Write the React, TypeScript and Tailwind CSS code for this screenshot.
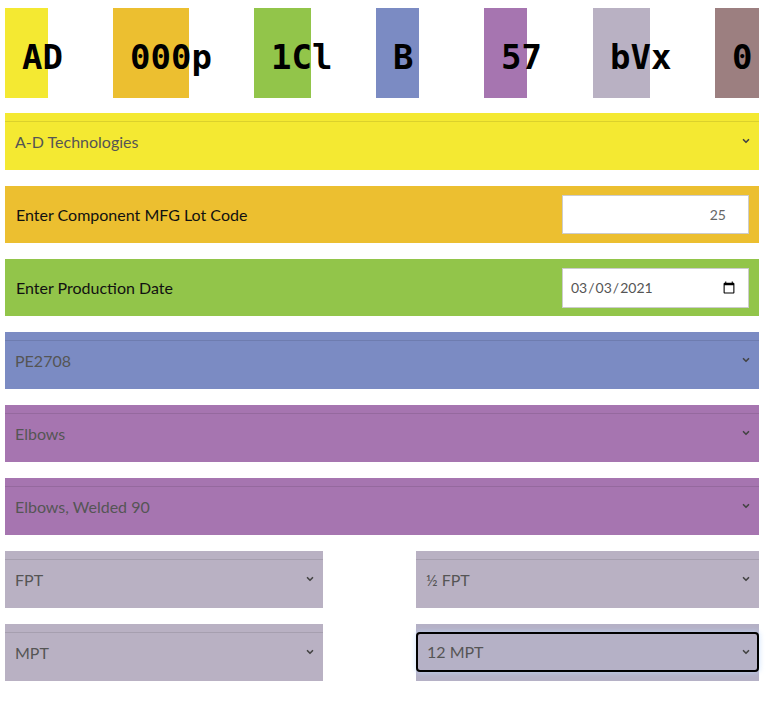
import { ChevronDown } from "lucide-react";

const cells = [
  { text: "AD", bg: "bg-[#f4e932]", box: "w-[43px]", cell: "w-[108px]" },
  { text: "000p", bg: "bg-[#ecbf30]", box: "w-[76px]", cell: "w-[141px]" },
  { text: "1Cl", bg: "bg-[#92c54a]", box: "w-[57px]", cell: "w-[122px]" },
  { text: "B", bg: "bg-[#7b8bc3]", box: "w-[43px]", cell: "w-[108px]" },
  { text: "57", bg: "bg-[#a675b0]", box: "w-[43px]", cell: "w-[109px]" },
  { text: "bVx", bg: "bg-[#b9b1c3]", box: "w-[57px]", cell: "w-[122px]" },
  { text: "0", bg: "bg-[#9c7f80]", box: "w-[44px]", cell: "w-[44px]" },
];

function SelectRow({
  value,
  bg,
  width = "w-full",
  focused = false,
}: {
  value: string;
  bg: string;
  width?: string;
  focused?: boolean;
}) {
  return (
    <div className={`${bg} ${width} h-[57px] pt-[8px]`}>
      <div className="relative">
        <select
          defaultValue={value}
          className={
            focused
              ? "block w-full h-[40px] appearance-none rounded-[4px] border-2 border-black bg-transparent pl-[9px] text-[16px] text-[#555] outline-none shadow-[0_0_5px_1px_rgba(191,219,254,0.6)]"
              : "block w-full h-[40px] appearance-none border-t border-black/10 bg-transparent pl-[10px] text-[16px] text-[#555] outline-none"
          }
        >
          <option>{value}</option>
        </select>
        <ChevronDown
          className="pointer-events-none absolute right-[8px] top-[15px] h-[10px] w-[10px] text-[#444]"
          strokeWidth={4}
        />
      </div>
    </div>
  );
}

function InputRow({ label, bg, children }: { label: string; bg: string; children: React.ReactNode }) {
  return (
    <div className={`${bg} flex h-[57px] items-center justify-between pl-[11px] pr-[10px]`}>
      <span className="text-[16px] text-[#111]">{label}</span>
      {children}
    </div>
  );
}

export default function App() {
  return (
    <div className="min-h-[719px] bg-white pt-[8px] font-['Lato',sans-serif]">
      <div className="ml-[5px] flex">
        {cells.map((c) => (
          <div key={c.text} className={`${c.cell} grid shrink-0`}>
            <div className={`${c.bg} ${c.box} col-start-1 row-start-1 h-[90px]`} />
            <span className="col-start-1 row-start-1 self-center whitespace-nowrap pl-[17px] pt-[8px] font-['DejaVu_Sans_Mono',monospace] text-[34px] font-bold text-black">
              {c.text}
            </span>
          </div>
        ))}
      </div>

      <div className="ml-[5px] mt-[15px] flex w-[754px] flex-col gap-[16px]">
        <SelectRow value="A-D Technologies" bg="bg-[#f4e932]" />
        <InputRow label="Enter Component MFG Lot Code" bg="bg-[#ecbf30]">
          <input
            type="text"
            defaultValue="25"
            className="h-[39px] w-[187px] border border-[#ccc] bg-white pr-[22px] text-right text-[14px] text-[#666] outline-none"
          />
        </InputRow>
        <InputRow label="Enter Production Date" bg="bg-[#92c54a]">
          <input
            type="date"
            defaultValue="2021-03-03"
            className="h-[40px] w-[187px] border border-[#ccc] bg-white pl-[7px] pr-[10px] text-[14px] text-[#555] outline-none"
          />
        </InputRow>
        <SelectRow value="PE2708" bg="bg-[#7b8bc3]" />
        <SelectRow value="Elbows" bg="bg-[#a675b0]" />
        <SelectRow value="Elbows, Welded 90" bg="bg-[#a675b0]" />
        <div className="flex justify-between">
          <SelectRow value="FPT" bg="bg-[#b9b1c3]" width="w-[318px]" />
          <SelectRow value="½ FPT" bg="bg-[#b9b1c3]" width="w-[343px]" />
        </div>
        <div className="flex justify-between">
          <SelectRow value="MPT" bg="bg-[#b9b1c3]" width="w-[318px]" />
          <SelectRow value="12 MPT" bg="bg-[#b5b1c6]" width="w-[343px]" focused />
        </div>
      </div>
    </div>
  );
}
